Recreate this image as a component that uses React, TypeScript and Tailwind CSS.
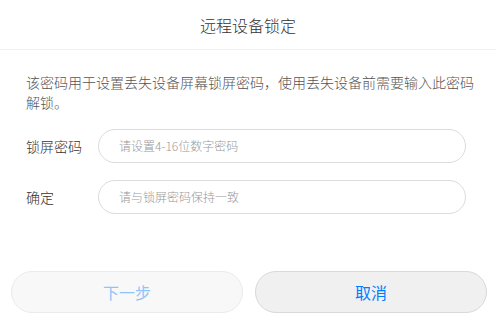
import React from "react";

export default function App() {
  const font = { fontFamily: '"Noto Sans CJK SC", "Noto Sans", sans-serif' };
  return (
    <div className="w-[496px] h-[324px] bg-white flex flex-col font-light" style={font}>
      <div className="h-[50px] flex items-center justify-center border-b border-[#f0f0f0] text-[16px] text-[#333]">
        远程设备锁定
      </div>
      <div className="pl-[26px] pr-[12px] pt-[22px] text-[14px] leading-[20px] text-[#555]">
        该密码用于设置丢失设备屏幕锁屏密码，使用丢失设备前需要输入此密码解锁。
      </div>
      <div className="flex flex-col gap-[17px] pt-[17px] pl-[26px]">
        <div className="flex items-center">
          <div className="w-[72px] text-[14px] text-[#333]">锁屏密码</div>
          <div className="w-[368px] h-[34px] rounded-full border border-[#dcdcdc] flex items-center pl-[20px] text-[12px] text-[#999]">
            请设置4-16位数字密码
          </div>
        </div>
        <div className="flex items-center">
          <div className="w-[72px] text-[14px] text-[#333]">确定</div>
          <div className="w-[368px] h-[34px] rounded-full border border-[#dcdcdc] flex items-center pl-[20px] text-[12px] text-[#999]">
            请与锁屏密码保持一致
          </div>
        </div>
      </div>
      <div className="flex-1" />
      <div className="flex gap-[12px] pl-[11px] pr-[9px] pb-[11px] font-normal">
        <div className="flex-1 h-[42px] rounded-full bg-[#f8f8f8] border border-[#ebebeb] flex items-center justify-center text-[16px] text-[#90c4f8]">
          下一步
        </div>
        <div className="flex-1 h-[42px] rounded-full bg-[#f0f0f0] border border-[#d9d9d9] flex items-center justify-center text-[16px] text-[#007dff]">
          取消
        </div>
      </div>
    </div>
  );
}
